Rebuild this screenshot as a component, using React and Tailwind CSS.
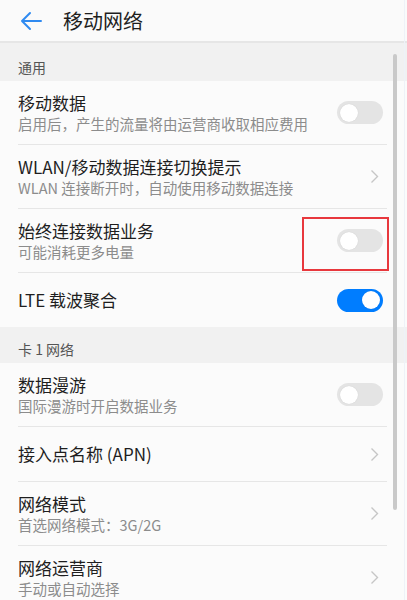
import React from "react";

const font = { fontFamily: '"Noto Sans CJK SC", "Noto Sans", sans-serif' };

function Toggle({ on }) {
  return (
    <div
      className={`w-[46px] h-[23px] rounded-full flex items-center px-[3px] ${
        on ? "bg-[#007dff] justify-end" : "bg-[#e4e4e4] justify-start"
      }`}
    >
      <div className="w-[18px] h-[18px] rounded-full bg-white shadow-[0_0_1px_rgba(0,0,0,0.15)]"></div>
    </div>
  );
}

function Chevron() {
  return (
    <svg width="9" height="15" viewBox="0 0 9 15" className="mr-[4px]">
      <path d="M1.5 1.5 L7.5 7.5 L1.5 13.5" fill="none" stroke="#c6c6c6" strokeWidth="1.4" />
    </svg>
  );
}

function Row({ title, sub, right, last, children }) {
  return (
    <div className="relative">
      <div
        className={`flex items-center justify-between pl-[18px] pr-[24px] ${
          sub ? "h-[63px]" : "h-[54px]"
        }`}
      >
        <div className="flex flex-col">
          <div className="text-[17px] leading-[22px] text-[#1e1e1e]">{title}</div>
          {sub && <div className="text-[14.5px] leading-[20px] text-[#8c8c8c]">{sub}</div>}
        </div>
        {right}
      </div>
      {!last && <div className="ml-[18px] mr-[20px] h-px bg-[#e6e6e6]"></div>}
      {children}
    </div>
  );
}

function Section({ label, h }) {
  return (
    <div className={`bg-[#f1f1f1] flex items-end pl-[18px] pb-[5px] ${h}`}>
      <span className="text-[14px] leading-[18px] text-[#555]">{label}</span>
    </div>
  );
}

export default function App() {
  return (
    <div className="relative h-[600px] w-[407px] overflow-hidden bg-[#fbfbfb]" style={font}>
      <div className="h-[43px] bg-[#fafafa] flex items-center border-b-2 border-[#e6e6e6]">
        <svg width="24" height="20" viewBox="0 0 24 20" className="ml-[19px]">
          <path d="M22 10 H3 M11 2 L3 10 L11 18" fill="none" stroke="#2f8af0" strokeWidth="2" strokeLinecap="round" strokeLinejoin="round" />
        </svg>
        <span className="ml-[20px] text-[20px] text-[#1e1e1e]">移动网络</span>
      </div>

      <Section label="通用" h="h-[38px]" />
      <Row title="移动数据" sub="启用后，产生的流量将由运营商收取相应费用" right={<Toggle />} />
      <Row title="WLAN/移动数据连接切换提示" sub="WLAN 连接断开时，自动使用移动数据连接" right={<Chevron />} />
      <Row title="始终连接数据业务" sub="可能消耗更多电量" right={<Toggle />}>
        <div className="absolute left-[302px] top-[8px] w-[87px] h-[54px] border-2 border-[#e8383d]"></div>
      </Row>
      <Row title="LTE 载波聚合" right={<Toggle on />} last />

      <Section label="卡 1 网络" h="h-[36px]" />
      <Row title="数据漫游" sub="国际漫游时开启数据业务" right={<Toggle />} />
      <Row title="接入点名称 (APN)" right={<Chevron />} />
      <Row title="网络模式" sub="首选网络模式：3G/2G" right={<Chevron />} />
      <Row title="网络运营商" sub="手动或自动选择" right={<Chevron />} />

      <div className="absolute left-[393px] top-[54px] w-[4px] h-[456px] rounded-full bg-[#c9c9c9]"></div>
      <div className="absolute right-[2px] top-0 w-px h-full bg-[#eef2f8]"></div>
    </div>
  );
}
